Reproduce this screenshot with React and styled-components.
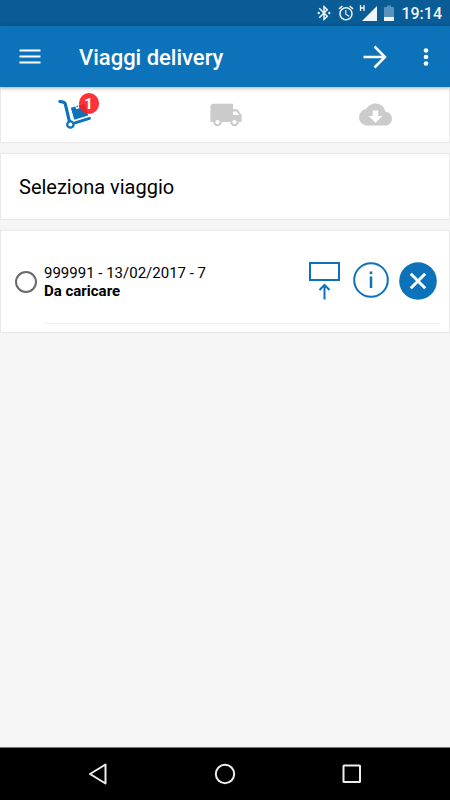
import React from "react";
import styled, { createGlobalStyle } from "styled-components";
import {
  MdAccessAlarm,
  MdBluetoothConnected,
  MdCloudDownload,
  MdLocalShipping,
} from "react-icons/md";

const BLUE = "#0c73bb";

const GlobalStyle = createGlobalStyle`
  * { box-sizing: border-box; }
  body {
    margin: 0;
    background: #f5f5f5;
    color: #000;
    font-family: Roboto, "Liberation Sans", sans-serif;
  }
  button { font: inherit; }
`;

const Screen = styled.div`
  display: flex;
  flex-direction: column;
  min-height: 100vh;
`;

const StatusBar = styled.div`
  display: flex;
  align-items: center;
  justify-content: flex-end;
  height: 26px;
  padding-right: 8px;
  background: #0a5c96;
  color: #f0f5fa;
`;

const StatusIcons = styled.div`
  display: flex;
  align-items: center;
  gap: 4px;
  margin-right: 6px;

  svg { display: block; }
`;

const Clock = styled.time`
  font-size: 16px;
  line-height: 26px;
  font-weight: 500;
  padding-top: 2px;
`;

const AppBar = styled.header`
  position: relative;
  display: flex;
  align-items: center;
  height: 61px;
  padding: 0 6px 0 10px;
  background: ${BLUE};
  color: #fff;
  box-shadow: 0 1px 4px rgba(0, 0, 0, 0.35);
`;

const IconButton = styled.button`
  display: flex;
  align-items: center;
  justify-content: center;
  flex: none;
  width: ${(p) => p.$width || 40}px;
  height: 40px;
  padding: 0;
  border: 0;
  background: none;
  color: inherit;
  cursor: pointer;

  svg { display: block; }
`;

const AppActions = styled.div`
  display: flex;
  gap: 8px;
`;

const Title = styled.h1`
  flex: 1;
  margin: 0 0 0 29px;
  padding-top: 2px;
  font-size: 22px;
  line-height: 28px;
  font-weight: 500;
`;

const Content = styled.main`
  display: flex;
  flex: 1;
  flex-direction: column;
  gap: 10px;
`;

const Card = styled.section`
  background: #fff;
  border: 1px solid #e9e9e9;
`;

const Tabs = styled(Card).attrs({ as: "nav" })`
  display: grid;
  grid-template-columns: repeat(3, 1fr);
  border-top: 0;
`;

const Tab = styled.button`
  display: flex;
  align-items: center;
  justify-content: center;
  height: 55px;
  padding: 0 0 0 2px;
  border: 0;
  background: none;
  color: #cbcbcb;
  cursor: pointer;
`;

const BadgeAnchor = styled.span`
  position: relative;
  display: block;
  margin-right: 4px;

  svg { display: block; }
`;

const Badge = styled.span`
  position: absolute;
  top: -7px;
  right: -7px;
  width: 20px;
  height: 21px;
  border-radius: 10px;
  background: rgba(255, 28, 36, 0.9);
  color: #fff;
  font-size: 15px;
  line-height: 22px;
  font-weight: 700;
  text-align: center;
`;

const Heading = styled.h2`
  margin: 0;
  padding: 19px 18px 18px;
  font-size: 20px;
  line-height: 28px;
  font-weight: 400;
`;

const TripList = styled(Card)`
  padding: 20px 9px 8px 14px;
`;

const Trip = styled.div`
  display: grid;
  grid-template-columns: 22px 1fr auto;
  column-gap: 7px;
  align-items: center;
`;

const Radio = styled.input`
  appearance: none;
  width: 22px;
  height: 22px;
  margin: 0;
  border: 2px solid #6a6a6a;
  border-radius: 50%;
  background: #fff;

  &:checked { box-shadow: inset 0 0 0 4px #fff; background: ${BLUE}; }
`;

const TripLabel = styled.label`
  font-size: 15px;
  font-weight: 400;
  line-height: 18px;
`;

const TripState = styled.strong`
  display: block;
  font-weight: 700;
`;

const Actions = styled.div`
  display: flex;
  align-items: center;
  gap: 6px;
  padding: 9px 2px 13px 0;
  color: ${BLUE};
`;

const Divider = styled.hr`
  height: 1px;
  margin: 10px 0 0 29px;
  border: 0;
  background: #eeeeee;
`;

const NavBar = styled.footer`
  display: grid;
  grid-template-columns: 1fr 58px 1fr;
  align-items: center;
  justify-items: center;
  height: 53px;
  background: #000;
  border-top: 1px solid #777;
  color: #eee;
`;

const SignalIcon = () => (
  <svg width="20" height="18" viewBox="0 0 20 18" fill="none" aria-hidden="true">
    <path d="M18 2v15H3z" fill="currentColor" />
    <path d="M1.500 1v6M5 1v6M1.500 4H5" stroke="currentColor" strokeWidth="1.300" />
  </svg>
);

const BatteryIcon = () => (
  <svg width="12" height="18" viewBox="0 0 12 18" aria-hidden="true">
    <path d="M1 3h3V1.500h4V3h3v11H1z" fill="#5b92bd" />
    <path d="M1 13h10v4H1z" fill="currentColor" />
  </svg>
);

const MenuIcon = () => (
  <svg width="22" height="16" viewBox="0 0 22 16" aria-hidden="true">
    <path d="M0.500 1.500h21M0.500 7.500h21M0.500 13.500h21" stroke="currentColor" strokeWidth="2" />
  </svg>
);

const ForwardIcon = () => (
  <svg width="26" height="26" viewBox="0 0 26 26" fill="none" aria-hidden="true">
    <path d="M1.500 13h21M12.500 2.500L23 13 12.500 23.500" stroke="currentColor" strokeWidth="2.500" />
  </svg>
);

const MoreIcon = () => (
  <svg width="6" height="20" viewBox="0 0 6 20" fill="currentColor" aria-hidden="true">
    <circle cx="3" cy="3.500" r="2.300" />
    <circle cx="3" cy="10" r="2.300" />
    <circle cx="3" cy="16.500" r="2.300" />
  </svg>
);

const CartIcon = () => (
  <svg width="34" height="30" viewBox="0 0 34 30" fill="none" color={BLUE} aria-hidden="true">
    <path d="M2 1.500L5.300 2.100Q6.800 2.400 7.300 4L11.300 21" stroke="currentColor" strokeWidth="3.200" strokeLinecap="round" strokeLinejoin="round" />
    <path d="M17 22.800L31.500 18.300" stroke="currentColor" strokeWidth="2.800" strokeLinecap="round" />
    <circle cx="12.400" cy="24.500" r="3.200" fill="#fff" stroke="currentColor" strokeWidth="2.300" />
    <path d="M12.800 7.800L17.300 6.500 18.300 9.200 21.400 8.300 20.800 5.400 26.500 3.800 30.200 15.500 16.300 19.700Z" fill="currentColor" />
    <path d="M18.300 5.900l1.500-.4.400 1.400-1.500.4z" fill="currentColor" />
  </svg>
);

const LoadIcon = () => (
  <svg width="34" height="40" viewBox="0 0 34 40" fill="none" stroke="currentColor" aria-hidden="true">
    <path d="M1 3h29v17H1z" strokeWidth="2" />
    <path d="M15.500 39.500V25M10.500 30l5-5 5 5" strokeWidth="2" />
  </svg>
);

const InfoIcon = () => (
  <svg width="38" height="36" viewBox="0 0 38 36" fill="none" aria-hidden="true">
    <circle cx="18" cy="18" r="16.800" stroke="currentColor" strokeWidth="2" />
    <path d="M18 14.500V26" stroke="currentColor" strokeWidth="2.500" />
    <path d="M16.700 9.500h2.600v2.500h-2.600z" fill="currentColor" />
  </svg>
);

const RemoveIcon = () => (
  <svg width="38" height="40" viewBox="0 0 38 40" fill="none" aria-hidden="true">
    <circle cx="19" cy="21" r="18.800" fill="currentColor" />
    <path d="M11.800 13.800l14.400 14.400M26.200 13.800L11.800 28.200" stroke="#fff" strokeWidth="3" />
  </svg>
);

const BackIcon = () => (
  <svg width="20" height="22" viewBox="0 0 20 22" fill="none" aria-hidden="true">
    <path d="M17.500 1.500v19L2 11z" stroke="currentColor" strokeWidth="2" strokeLinejoin="round" />
  </svg>
);

const HomeIcon = () => (
  <svg width="22" height="22" viewBox="0 0 22 22" fill="none" aria-hidden="true">
    <circle cx="11" cy="11" r="9.200" stroke="currentColor" strokeWidth="2" />
  </svg>
);

const RecentIcon = () => (
  <svg width="20" height="20" viewBox="0 0 20 20" fill="none" aria-hidden="true">
    <rect x="1.500" y="1.500" width="16.500" height="16.500" rx="0.500" stroke="currentColor" strokeWidth="2" />
  </svg>
);

export default function App() {
  return (
    <Screen>
      <GlobalStyle />
      <StatusBar>
        <StatusIcons>
          <MdBluetoothConnected size={18} />
          <MdAccessAlarm size={18} />
          <SignalIcon />
          <BatteryIcon />
        </StatusIcons>
        <Clock>19:14</Clock>
      </StatusBar>
      <AppBar>
        <IconButton aria-label="Menu"><MenuIcon /></IconButton>
        <Title>Viaggi delivery</Title>
        <AppActions>
          <IconButton $width={50} aria-label="Avanti"><ForwardIcon /></IconButton>
          <IconButton $width={36} aria-label="Altre opzioni"><MoreIcon /></IconButton>
        </AppActions>
      </AppBar>
      <Content>
        <Tabs>
          <Tab aria-label="Carico, 1 viaggio">
            <BadgeAnchor>
              <CartIcon />
              <Badge>1</Badge>
            </BadgeAnchor>
          </Tab>
          <Tab aria-label="Consegna"><MdLocalShipping size={34} /></Tab>
          <Tab aria-label="Scarica"><MdCloudDownload size={33} /></Tab>
        </Tabs>
        <Card>
          <Heading>Seleziona viaggio</Heading>
        </Card>
        <TripList>
          <Trip>
            <Radio type="radio" name="trip" id="trip-999991" />
            <TripLabel htmlFor="trip-999991">
              999991 - 13/02/2017 - 7
              <TripState>Da caricare</TripState>
            </TripLabel>
            <Actions>
              <IconButton aria-label="Carica"><LoadIcon /></IconButton>
              <IconButton aria-label="Informazioni"><InfoIcon /></IconButton>
              <IconButton aria-label="Rimuovi"><RemoveIcon /></IconButton>
            </Actions>
          </Trip>
          <Divider />
        </TripList>
      </Content>
      <NavBar>
        <IconButton aria-label="Indietro"><BackIcon /></IconButton>
        <IconButton aria-label="Home"><HomeIcon /></IconButton>
        <IconButton aria-label="Recenti"><RecentIcon /></IconButton>
      </NavBar>
    </Screen>
  );
}
